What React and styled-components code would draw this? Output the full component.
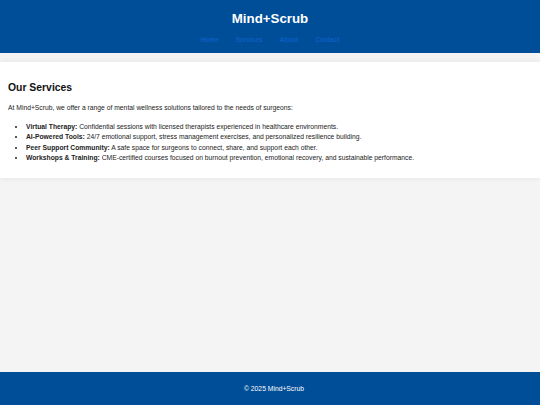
import React from "react";
import styled, { createGlobalStyle } from "styled-components";

const GlobalStyle = createGlobalStyle`
  html, body {
    margin: 0;
    padding: 0;
  }
  body {
    font-family: "Liberation Sans", Arial, sans-serif;
    background-color: #f4f4f4;
    color: #222;
  }
`;

const Page = styled.div`
  min-height: 100vh;
  display: flex;
  flex-direction: column;
`;

const HeaderEl = styled.header`
  background-color: #004e98;
  height: 53px;
  display: flex;
  flex-direction: column;
  align-items: center;
  box-sizing: border-box;
  padding-top: 10px;
`;

const Brand = styled.h1`
  margin: 0;
  color: #fff;
  font-size: 13.3px;
  font-weight: bold;
  line-height: 18px;
`;

const Nav = styled.nav`
  display: flex;
  gap: 17px;
  margin-top: 7px;
`;

const NavLink = styled.a`
  color: #0a5fc2;
  font-size: 6.5px;
  font-weight: bold;
  text-decoration: none;
  line-height: 10px;
`;

const Main = styled.main`
  flex: 1;
  padding-top: 9px;
`;

const Section = styled.section`
  background: #fff;
  padding: 9px 8px 14px;
  box-shadow: 0 0 6px rgba(0, 0, 0, 0.08);
`;

const Heading = styled.h2`
  margin: 10px 0 0;
  font-size: 10.4px;
  font-weight: bold;
  color: #111;
  line-height: 14px;
`;

const Text = styled.p`
  margin: 8px 0 0;
  font-size: 6.75px;
  line-height: 10.5px;
`;

const List = styled.ul`
  margin: 8px 0 0;
  padding-left: 18px;
  font-size: 6.75px;
  line-height: 10.6px;
`;

const Item = styled.li``;

const Footer = styled.footer`
  background-color: #004e98;
  height: 33px;
  display: flex;
  align-items: center;
  justify-content: center;
  padding-left: 8px;
  color: #fff;
  font-size: 6.75px;
`;

const services = [
  ["Virtual Therapy:", " Confidential sessions with licensed therapists experienced in healthcare environments."],
  ["AI-Powered Tools:", " 24/7 emotional support, stress management exercises, and personalized resilience building."],
  ["Peer Support Community:", " A safe space for surgeons to connect, share, and support each other."],
  ["Workshops & Training:", " CME-certified courses focused on burnout prevention, emotional recovery, and sustainable performance."],
];

export default function App() {
  return (
    <>
      <GlobalStyle />
      <Page>
        <HeaderEl>
          <Brand>Mind+Scrub</Brand>
          <Nav>
            <NavLink href="#">Home</NavLink>
            <NavLink href="#">Services</NavLink>
            <NavLink href="#">About</NavLink>
            <NavLink href="#">Contact</NavLink>
          </Nav>
        </HeaderEl>
        <Main>
          <Section>
            <Heading>Our Services</Heading>
            <Text>
              At Mind+Scrub, we offer a range of mental wellness solutions tailored to the needs of surgeons:
            </Text>
            <List>
              {services.map(([title, desc]) => (
                <Item key={title}>
                  <strong>{title}</strong>
                  {desc}
                </Item>
              ))}
            </List>
          </Section>
        </Main>
        <Footer>© 2025 Mind+Scrub</Footer>
      </Page>
    </>
  );
}
